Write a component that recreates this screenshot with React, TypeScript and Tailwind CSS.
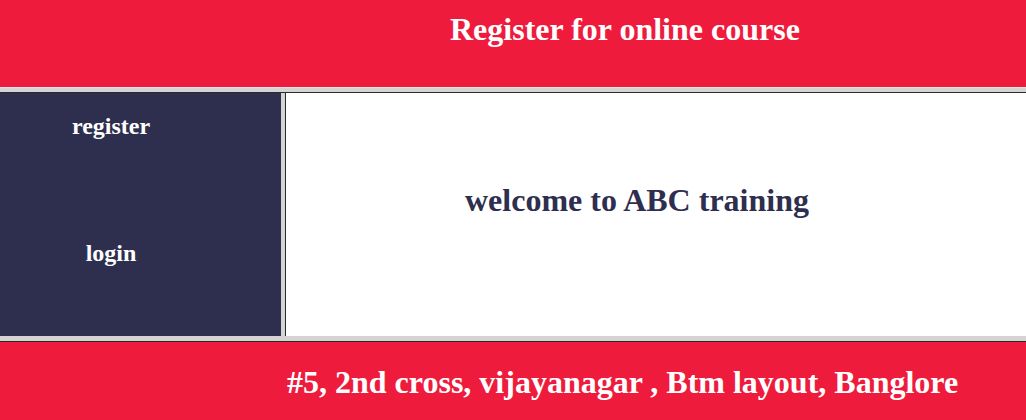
export default function App() {
  const serif = { fontFamily: '"Liberation Serif", "Times New Roman", serif' };
  return (
    <div className="w-[1026px] h-[420px] flex flex-col overflow-hidden font-bold" style={serif}>
      <div className="h-[87px] bg-[#ee1b3c] text-white pt-[13px] pl-[450px] text-[32px] leading-[32px]">
        Register for online course
      </div>
      <div className="h-px bg-[#e6e6e6]" />
      <div className="h-[4px] bg-[#d4d4d4]" />
      <div className="h-px bg-[#2a2a2a]" />
      <div className="h-[243px] flex">
        <div className="w-[281px] bg-[#2e2e4e] text-white pt-[21px]">
          <div className="w-[222px] text-center text-[24px] leading-[24px]">register</div>
          <div className="w-[222px] text-center text-[24px] leading-[24px] mt-[103px]">login</div>
        </div>
        <div className="w-[4px] bg-[#d4d4d4]" />
        <div className="w-px bg-[#2a2a2a]" />
        <div className="flex-1 bg-white text-[#2e2e4e] pt-[91px] pl-[179px] text-[32px] leading-[32px]">
          welcome to ABC training
        </div>
      </div>
      <div className="h-[5px] bg-[#d4d4d4]" />
      <div className="h-px bg-[#2a2a2a]" />
      <div className="flex-1 bg-[#ee1b3c] text-white pt-[24px] pl-[287px] text-[32px] leading-[32px]">
        #5, 2nd cross, vijayanagar , Btm layout, Banglore
      </div>
    </div>
  );
}
